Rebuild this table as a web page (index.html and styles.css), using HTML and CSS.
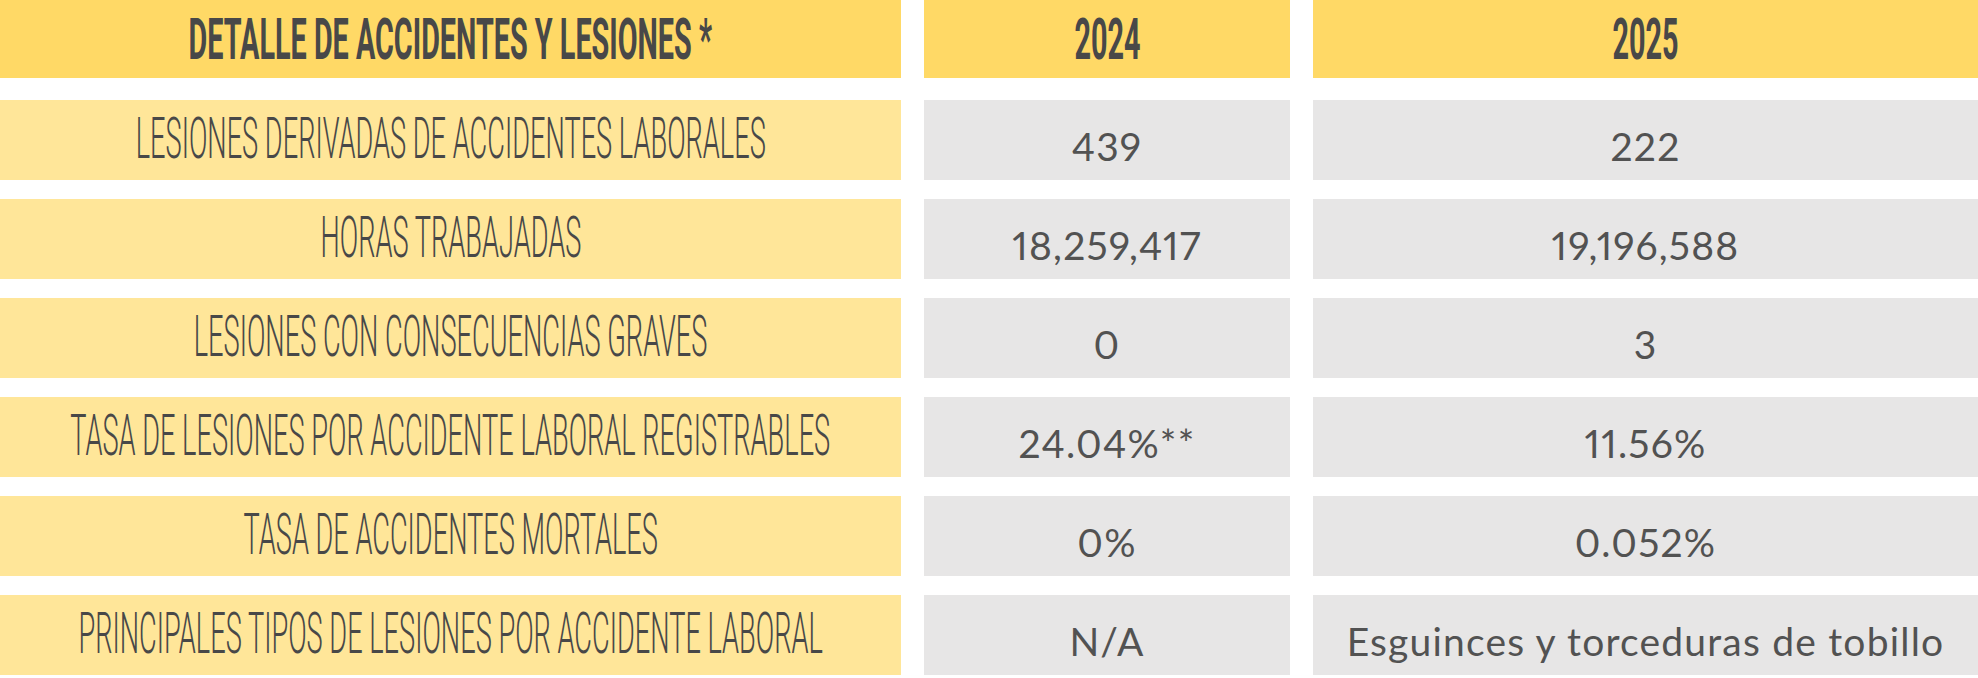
FILE: index.html
```html
<!DOCTYPE html>
<html lang="es">
<head>
<meta charset="utf-8">
<title>Detalle de accidentes y lesiones</title>
<link rel="stylesheet" href="styles.css">
</head>
<body>
<div class="sheet">
  <div class="grid head-grid">
    <div class="cell head"><span class="cond-bold">DETALLE DE ACCIDENTES Y LESIONES *</span></div>
    <div class="cell head"><span class="cond-bold">2024</span></div>
    <div class="cell head"><span class="cond-bold">2025</span></div>
  </div>
  <div class="grid body-grid">
    <div class="cell label"><span class="cond">LESIONES DERIVADAS DE ACCIDENTES LABORALES</span></div>
    <div class="cell value">439</div>
    <div class="cell value">222</div>

    <div class="cell label"><span class="cond">HORAS TRABAJADAS</span></div>
    <div class="cell value">18,259,417</div>
    <div class="cell value">19,196,588</div>

    <div class="cell label"><span class="cond">LESIONES CON CONSECUENCIAS GRAVES</span></div>
    <div class="cell value">0</div>
    <div class="cell value">3</div>

    <div class="cell label"><span class="cond">TASA DE LESIONES POR ACCIDENTE LABORAL REGISTRABLES</span></div>
    <div class="cell value">24.04%**</div>
    <div class="cell value">11.56%</div>

    <div class="cell label"><span class="cond">TASA DE ACCIDENTES MORTALES</span></div>
    <div class="cell value">0%</div>
    <div class="cell value">0.052%</div>

    <div class="cell label"><span class="cond">PRINCIPALES TIPOS DE LESIONES POR ACCIDENTE LABORAL</span></div>
    <div class="cell value">N/A</div>
    <div class="cell value">Esguinces y torceduras de tobillo</div>
  </div>
</div>
</body>
</html>
```

FILE: styles.css
```css
html, body {
  margin: 0;
  padding: 0;
  background: #ffffff;
}

.sheet {
  width: 1978px;
  display: flex;
  flex-direction: column;
}

.grid {
  display: grid;
  grid-template-columns: 901px 366px 665px;
  column-gap: 23px;
}

.head-grid {
  grid-template-rows: 78px;
  margin-bottom: 22px;
}

.body-grid {
  grid-auto-rows: 80px;
  row-gap: 19px;
}

.cell {
  display: flex;
  align-items: center;
  justify-content: center;
  overflow: visible;
  white-space: nowrap;
  color: #484848;
}

.head {
  background: #ffd966;
}

.label {
  background: #ffe699;
  padding-bottom: 5px;
  box-sizing: border-box;
}

.value {
  background: #e7e6e6;
  font-family: "Lato", "Liberation Sans", sans-serif;
  font-size: 39px;
  font-weight: 400;
  color: #525252;
  padding-top: 11px;
  box-sizing: border-box;
  letter-spacing: 1.2px;
  font-variant-numeric: proportional-nums;
}

.cond-bold {
  display: inline-block;
  font-family: "Roboto", "Liberation Sans", sans-serif;
  font-weight: 700;
  font-size: 57px;
  line-height: 1;
  transform: scaleX(0.505);
  transform-origin: center;
  flex-shrink: 0;
}

.cond {
  display: inline-block;
  font-family: "Roboto", "Liberation Sans", sans-serif;
  font-weight: 300;
  font-size: 58px;
  line-height: 1;
  transform: scaleX(0.469);
  transform-origin: center;
  flex-shrink: 0;
}
```
